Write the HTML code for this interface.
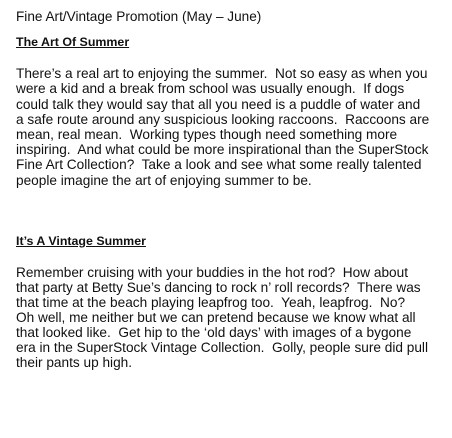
<!DOCTYPE html>
<html><head><meta charset="utf-8"><style>
body{margin:0;background:#fff;width:452px;height:438px;position:relative;overflow:hidden;font-family:"Liberation Sans",sans-serif;color:#111;}
div{position:absolute;left:16px;white-space:nowrap;font-size:13.65px;line-height:15px;}
.h{font-weight:bold;text-decoration:underline;font-size:12.4px;}
</style></head><body>
<div style="top:9px;font-size:13.6px">Fine Art/Vintage Promotion (May – June)</div>
<div class="h" style="top:35px">The Art Of Summer</div>
<div style="top:66px">There’s a real art to enjoying the summer.&nbsp; Not so easy as when you</div>
<div style="top:81px">were a kid and a break from school was usually enough.&nbsp; If dogs</div>
<div style="top:97px">could talk they would say that all you need is a puddle of water and</div>
<div style="top:112px">a safe route around any suspicious looking raccoons.&nbsp; Raccoons are</div>
<div style="top:127px">mean, real mean.&nbsp; Working types though need something more</div>
<div style="top:142px">inspiring.&nbsp; And what could be more inspirational than the SuperStock</div>
<div style="top:157px">Fine Art Collection?&nbsp; Take a look and see what some really talented</div>
<div style="top:173px">people imagine the art of enjoying summer to be.</div>
<div class="h" style="top:234px">It’s A Vintage Summer</div>
<div style="top:265px">Remember cruising with your buddies in the hot rod?&nbsp; How about</div>
<div style="top:280px">that party at Betty Sue’s dancing to rock n’ roll records?&nbsp; There was</div>
<div style="top:295px">that time at the beach playing leapfrog too.&nbsp; Yeah, leapfrog.&nbsp; No?</div>
<div style="top:310px">Oh well, me neither but we can pretend because we know what all</div>
<div style="top:325px">that looked like.&nbsp; Get hip to the ‘old days’ with images of a bygone</div>
<div style="top:340px">era in the SuperStock Vintage Collection.&nbsp; Golly, people sure did pull</div>
<div style="top:355px">their pants up high.</div>
</body></html>
